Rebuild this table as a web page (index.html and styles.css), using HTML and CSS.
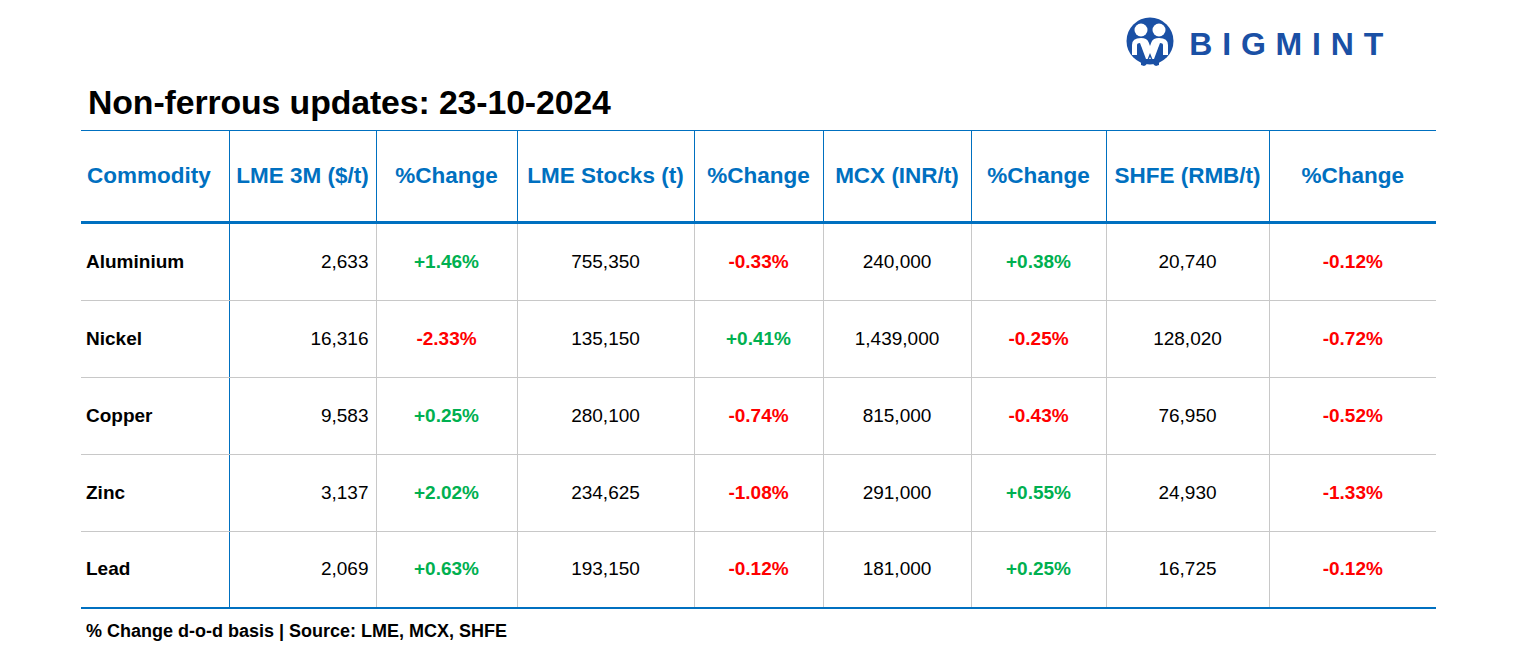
FILE: index.html
```html
<!DOCTYPE html>
<html>
<head>
<meta charset="utf-8">
<link rel="stylesheet" href="styles.css">
</head>
<body>
<div class="page">
  <div class="brand">
    <svg class="brand-icon" viewBox="0 0 48 50" width="48" height="50">
      <circle cx="24" cy="24" r="23.5" fill="#1a50a5"/>
      <circle cx="15" cy="13" r="6.5" fill="#fff"/>
      <circle cx="33" cy="13" r="6.5" fill="#fff"/>
      <path d="M6 38 V28 Q6 21 15 21 Q21 21 22.5 25 L24 29 L25.5 25 Q27 21 33 21 Q42 21 42 28 V38 H37 V28 Q37 26 34 26 L28 42 H20 L14 26 Q11 26 11 28 V38 Z" fill="#fff"/>
      <path d="M15 30 L20 46 L24 36 L28 46 L33 30 L33 48 L30 49 L28 48 L24 40 L20 48 L18 49 L15 48 Z" fill="#1a50a5"/>
    </svg>
    <span class="brand-name">BIGMINT</span>
  </div>
  <h1 class="title">Non-ferrous updates: 23-10-2024</h1>
  <table class="grid">
    <colgroup>
      <col style="width:148px"><col style="width:147px"><col style="width:141px"><col style="width:177px"><col style="width:129px"><col style="width:148px"><col style="width:135px"><col style="width:163px"><col style="width:167px">
    </colgroup>
    <thead>
      <tr>
        <th class="left">Commodity</th><th>LME 3M ($/t)</th><th>%Change</th><th>LME Stocks (t)</th><th>%Change</th><th>MCX (INR/t)</th><th>%Change</th><th>SHFE (RMB/t)</th><th>%Change</th>
      </tr>
    </thead>
    <tbody>
      <tr><td class="name">Aluminium</td><td class="num">2,633</td><td class="up">+1.46%</td><td>755,350</td><td class="down">-0.33%</td><td>240,000</td><td class="up">+0.38%</td><td>20,740</td><td class="down">-0.12%</td></tr>
      <tr><td class="name">Nickel</td><td class="num">16,316</td><td class="down">-2.33%</td><td>135,150</td><td class="up">+0.41%</td><td>1,439,000</td><td class="down">-0.25%</td><td>128,020</td><td class="down">-0.72%</td></tr>
      <tr><td class="name">Copper</td><td class="num">9,583</td><td class="up">+0.25%</td><td>280,100</td><td class="down">-0.74%</td><td>815,000</td><td class="down">-0.43%</td><td>76,950</td><td class="down">-0.52%</td></tr>
      <tr><td class="name">Zinc</td><td class="num">3,137</td><td class="up">+2.02%</td><td>234,625</td><td class="down">-1.08%</td><td>291,000</td><td class="up">+0.55%</td><td>24,930</td><td class="down">-1.33%</td></tr>
      <tr class="last"><td class="name">Lead</td><td class="num">2,069</td><td class="up">+0.63%</td><td>193,150</td><td class="down">-0.12%</td><td>181,000</td><td class="up">+0.25%</td><td>16,725</td><td class="down">-0.12%</td></tr>
    </tbody>
  </table>
  <p class="note">% Change d-o-d basis | Source: LME, MCX, SHFE</p>
</div>
</body>
</html>
```
FILE: styles.css
```css
html, body {
  margin: 0;
  padding: 0;
  background: #fff;
}
body {
  font-family: "Liberation Sans", Arial, sans-serif;
  color: #000;
}
.page {
  padding: 17px 0 0 81px;
  width: 1355px;
}
.brand {
  display: flex;
  align-items: center;
  justify-content: flex-end;
  gap: 15px;
  padding-right: 52px;
  height: 50px;
}
.brand-icon {
  display: block;
}
.brand-name {
  font-weight: 700;
  font-size: 32px;
  letter-spacing: 9.8px;
  color: #1a50a5;
  margin-right: -9px;
  line-height: 1;
  padding-top: 4px;
}
.title {
  margin: 15px 0 0 7px;
  font-size: 33.8px;
  font-weight: 700;
  line-height: 40px;
  letter-spacing: -0.1px;
  height: 48px;
}
.grid {
  border-collapse: collapse;
  table-layout: fixed;
  width: 1355px;
}
.grid th {
  color: #0070c0;
  font-size: 22.5px;
  font-weight: 700;
  height: 90px;
  padding: 0;
  text-align: center;
  white-space: nowrap;
  border-top: 1px solid #0070c0;
  border-bottom: 3px solid #0070c0;
  border-left: 1px solid #0070c0;
}
.grid th:first-child { border-left: none; }
.grid th.left { text-align: left; padding-left: 6px; }
.grid td {
  height: 75px;
  padding: 0 0 1px 0;
  font-size: 19px;
  text-align: center;
  border-bottom: 1px solid #c8c8c8;
  border-left: 1px solid #c8c8c8;
}
.grid td:first-child { border-left: none; }
.grid td:nth-child(2) { border-left: 1px solid #0070c0; }
.grid tr.last td {
  height: 74px;
  border-bottom: 2px solid #0070c0;
}
.grid td.name {
  text-align: left;
  font-weight: 700;
  padding-left: 5px;
}
.grid td.num {
  text-align: right;
  padding-right: 7px;
}
.grid td.up { color: #00b050; font-weight: 700; }
.grid td.down { color: #ff0000; font-weight: 700; }
.note {
  margin: 12px 0 0 5px;
  font-size: 18px;
  font-weight: 700;
}
```
